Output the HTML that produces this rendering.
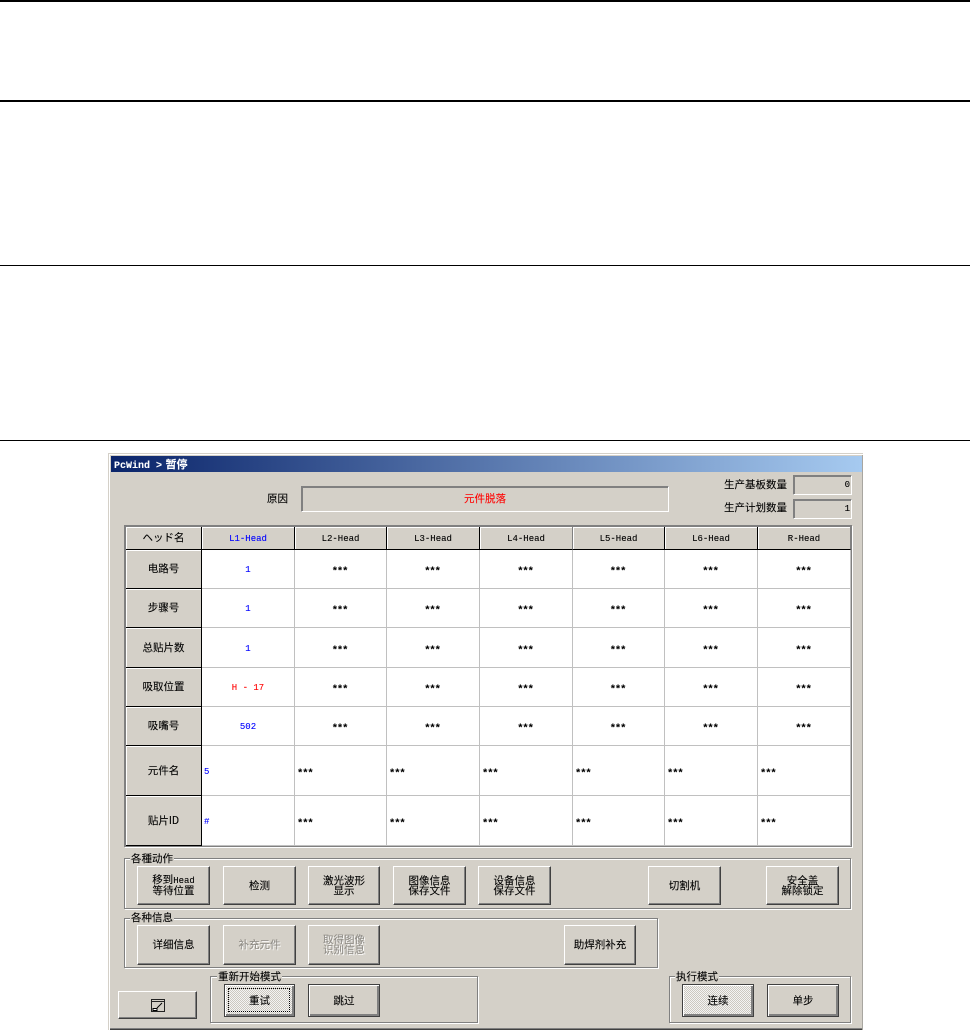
<!DOCTYPE html>
<html lang="zh"><head><meta charset="utf-8"><title>PcWind</title>
<style>
html,body{margin:0;padding:0;background:#fff}
body{position:relative;width:970px;height:1030px;overflow:hidden;font-family:"WenQuanYi Zen Hei","Noto Sans CJK SC",sans-serif;font-size:10.5px;line-height:10px;color:#000;-webkit-text-stroke:.1px currentColor}
.a,.h,.win,.b,.g,.l,.grid,.t{position:absolute}
.h{left:0;width:970px;background:#000}
.win{left:108px;top:453px;width:755px;height:577px;box-sizing:border-box;background:#d4d0c8;box-shadow:inset 1px 1px 0 #d4d0c8,inset 2px 2px 0 #fff,inset -1px 0 0 #a8a6a0,inset 0 -1px 0 #404040,inset 0 -2px 0 #808080}
.title{position:absolute;left:3px;top:3px;width:751px;height:16px;background:linear-gradient(90deg,#0a246a,#a6caf0);color:#fff;font-weight:bold;line-height:16px;padding-left:3px;box-sizing:border-box;font-size:11px}
.title span{font-family:"Liberation Mono",monospace;font-size:10px;margin-right:1px}
.t{text-align:center;white-space:nowrap}
.sunk{position:absolute;box-sizing:border-box;background:#d4d0c8;border:1px solid;border-color:#808080 #fff #fff #808080;box-shadow:inset 1px 1px 0 #808080}
.g{box-sizing:border-box;border:1px solid #808080;box-shadow:1px 1px 0 #fff,inset 1px 1px 0 #fff}
.l{background:#d4d0c8;padding:0 1px;white-space:nowrap;height:11px;line-height:11px}
.b{box-sizing:border-box;display:flex;align-items:center;justify-content:center;text-align:center;background:#d4d0c8;border:1px solid;border-color:#fff #404040 #404040 #fff;box-shadow:inset -1px -1px 0 #808080}
.b span,.m{font-family:"Liberation Mono",monospace;font-size:9px}
.d{color:#8f8c86;text-shadow:1px 1px 0 #fff}
.x{outline:1px solid #404040;outline-offset:-1px;border-color:#fff #404040 #404040 #fff;box-shadow:inset 1px 1px 0 #fff,inset -2px -2px 0 #808080}
.p{background:repeating-conic-gradient(#f4f4f4 0 25%,#ccc8c0 0 50%) 0 0/2px 2px}
.grid{left:124px;top:525px;width:728px;height:322px;box-sizing:border-box;border:2px solid #808080;border-right:1px solid #808080;border-bottom:1px solid #808080;box-shadow:1px 1px 0 #fff;background:#fff;display:grid;grid-template-columns:76px 93px 92px 93px 93px 92px 93px 93px;grid-template-rows:23px 39px 39px 40px 39px 39px 50px 50px}
.grid>div{box-sizing:border-box;display:flex;align-items:center;justify-content:center;padding-top:2px;border-right:1px solid #c0c0c0;border-bottom:1px solid #c0c0c0;font-family:"Liberation Mono",monospace;font-size:9px}
.grid>.hd{background:#d4d0c8;border-right:1px solid #000;border-bottom:1px solid #000;box-shadow:inset 1px 1px 0 #fff}
.grid>.r{font-family:"WenQuanYi Zen Hei","Noto Sans CJK SC",sans-serif;font-size:10.5px;padding-top:0}
.grid>.lf{justify-content:flex-start;padding-left:2px}
.grid>.s{font-size:10.5px;font-weight:bold;letter-spacing:-1.1px;padding-top:6px;padding-right:2px}
.grid>.lf.s{padding-right:0}
.blue{color:#00f}.red{color:#f00}
</style></head><body>
<div class="h" style="top:0;height:2px"></div>
<div class="h" style="top:100px;height:2px"></div>
<div class="h" style="top:265px;height:1px"></div>
<div class="h" style="top:440px;height:1px"></div>

<div class="win"><div class="title"><span>PcWind &gt;</span> 暂停</div></div>

<div class="t" style="left:267px;top:494px">原因</div>
<div class="sunk" style="left:301px;top:486px;width:368px;height:26px"></div>
<div class="t" style="left:301px;top:494px;width:368px;color:#f00">元件脱落</div>
<div class="t" style="left:724px;top:480px">生产基板数量</div>
<div class="t" style="left:724px;top:503px">生产计划数量</div>
<div class="sunk" style="left:793px;top:475px;width:59px;height:20px"></div>
<div class="sunk" style="left:793px;top:499px;width:59px;height:20px"></div>
<div class="t m" style="left:793px;top:480px;width:57px;text-align:right">0</div>
<div class="t m" style="left:793px;top:504px;width:57px;text-align:right">1</div>

<div class="grid">
<div class="hd r">ヘッド名</div><div class="hd blue">L1-Head</div><div class="hd">L2-Head</div><div class="hd">L3-Head</div><div class="hd" style="border-right-color:#808080">L4-Head</div><div class="hd">L5-Head</div><div class="hd">L6-Head</div><div class="hd" style="border-right-color:#808080">R-Head</div>
<div class="hd r">电路号</div><div class="blue">1</div><div class="s">***</div><div class="s">***</div><div class="s">***</div><div class="s">***</div><div class="s">***</div><div class="s">***</div>
<div class="hd r">步骤号</div><div class="blue">1</div><div class="s">***</div><div class="s">***</div><div class="s">***</div><div class="s">***</div><div class="s">***</div><div class="s">***</div>
<div class="hd r">总贴片数</div><div class="blue">1</div><div class="s">***</div><div class="s">***</div><div class="s">***</div><div class="s">***</div><div class="s">***</div><div class="s">***</div>
<div class="hd r">吸取位置</div><div class="red">H - 17</div><div class="s">***</div><div class="s">***</div><div class="s">***</div><div class="s">***</div><div class="s">***</div><div class="s">***</div>
<div class="hd r">吸嘴号</div><div class="blue">502</div><div class="s">***</div><div class="s">***</div><div class="s">***</div><div class="s">***</div><div class="s">***</div><div class="s">***</div>
<div class="hd r">元件名</div><div class="blue lf">5</div><div class="lf s">***</div><div class="lf s">***</div><div class="lf s">***</div><div class="lf s">***</div><div class="lf s">***</div><div class="lf s">***</div>
<div class="hd r">贴片ID</div><div class="blue lf">#</div><div class="lf s">***</div><div class="lf s">***</div><div class="lf s">***</div><div class="lf s">***</div><div class="lf s">***</div><div class="lf s">***</div>
</div>

<div class="g" style="left:124px;top:858px;width:727px;height:51px"></div>
<div class="l" style="left:130px;top:853px">各種动作</div>
<div class="b" style="left:137px;top:866px;width:73px;height:39px"><div>移到<span>Head</span><br>等待位置</div></div>
<div class="b" style="left:223px;top:866px;width:73px;height:39px">检测</div>
<div class="b" style="left:308px;top:866px;width:72px;height:39px"><div>激光波形<br>显示</div></div>
<div class="b" style="left:393px;top:866px;width:73px;height:39px"><div>图像信息<br>保存文件</div></div>
<div class="b" style="left:478px;top:866px;width:73px;height:39px"><div>设备信息<br>保存文件</div></div>
<div class="b" style="left:648px;top:866px;width:73px;height:39px">切割机</div>
<div class="b" style="left:766px;top:866px;width:73px;height:39px"><div>安全盖<br>解除锁定</div></div>

<div class="g" style="left:124px;top:918px;width:534px;height:50px"></div>
<div class="l" style="left:130px;top:912px">各种信息</div>
<div class="b" style="left:137px;top:925px;width:73px;height:40px">详细信息</div>
<div class="b d" style="left:223px;top:925px;width:73px;height:40px">补充元件</div>
<div class="b d" style="left:308px;top:925px;width:72px;height:40px"><div>取得图像<br>识别信息</div></div>
<div class="b" style="left:564px;top:925px;width:72px;height:40px">助焊剂补充</div>

<div class="b" style="left:118px;top:991px;width:79px;height:28px"><svg width="14" height="13" viewBox="0 0 14 13"><rect width="14" height="13" fill="#e8e8e8"/><path d="M0.5 .5H13.5V12.5H.5Z" fill="#d4d0c8" stroke="#222"/><path d="M1 2.5H13" stroke="#222"/><path d="M2 9.5H6V11.5H2Z" fill="#fff" stroke="#000"/><path d="M6 9L11 4" stroke="#000"/></svg></div>

<div class="g" style="left:210px;top:976px;width:268px;height:47px"></div>
<div class="l" style="left:217px;top:971px">重新开始模式</div>
<div class="b x p" style="left:224px;top:984px;width:71px;height:33px"><div style="position:absolute;left:3px;top:3px;right:4px;bottom:4px;border:1px dotted #000"></div><div style="position:relative">重试</div></div>
<div class="b x" style="left:308px;top:984px;width:72px;height:33px">跳过</div>

<div class="g" style="left:669px;top:976px;width:182px;height:47px"></div>
<div class="l" style="left:675px;top:971px">执行模式</div>
<div class="b x p" style="left:682px;top:984px;width:72px;height:33px"><div>连续</div></div>
<div class="b x" style="left:767px;top:984px;width:72px;height:33px">单步</div>
</body></html>
